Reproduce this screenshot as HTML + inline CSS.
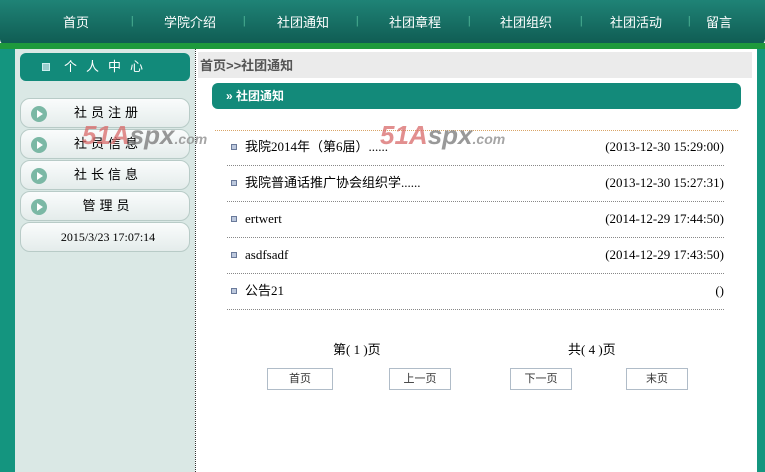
<!DOCTYPE html>
<html><head><meta charset="utf-8"><style>
*{margin:0;padding:0;box-sizing:border-box}
body{width:765px;height:472px;overflow:hidden;position:relative;background:#fff;font-family:"Liberation Serif","Noto Sans CJK SC",serif;font-size:12px;color:#000}
.a{position:absolute}
.hdr{left:0;top:0;width:765px;height:45px;background:linear-gradient(#1f8376,#0f5b52);border-radius:0 0 6px 6px}
.nav{top:12px;color:#fff;font-family:"Liberation Sans","Noto Sans CJK SC",sans-serif;font-size:13px}
.sep{top:13px;color:#8fc;font-size:12px;opacity:.7}
.gbar{left:0;top:43px;width:765px;height:6px;background:#1e9a3c}
.lstr{left:0;top:49px;width:15px;height:423px;background:#14957f}
.side{left:15px;top:49px;width:180px;height:423px;background:#dae8e5}
.dot{left:195px;top:49px;width:1px;height:423px;border-left:1px dotted #333}
.rstr{left:757px;top:49px;width:8px;height:423px;background:#14967f}
.pc{left:20px;top:53px;width:170px;height:28px;background:#128a7a;border-radius:6px;color:#fff;font-family:"Liberation Sans","Noto Sans CJK SC",sans-serif;font-size:13px;letter-spacing:9px;line-height:28px;padding-left:44px}
.pc i{position:absolute;left:22px;top:10px;width:8px;height:8px;background:#9cc;border:1px solid #cee}
.btn{left:20px;width:170px;height:30px;border:1px solid #b8cbc7;border-radius:10px;background:linear-gradient(#fafcfc,#e4eceb);font-family:"Liberation Sans","Noto Sans CJK SC",sans-serif;font-size:13px;letter-spacing:4px;line-height:28px;text-align:center;padding-left:6px}
.btn b{position:absolute;left:10px;top:7px;width:16px;height:16px;border-radius:50%;background:#7bb8a5}
.btn b:after{content:"";position:absolute;left:6px;top:4px;border-left:6px solid #fff;border-top:4px solid transparent;border-bottom:4px solid transparent}
.bc{left:198px;top:52px;width:554px;height:26px;background-image:radial-gradient(#bbb 0.7px,transparent 0.8px);background-size:2px 2px;font-weight:bold;color:#555;font-family:"Liberation Sans","Noto Sans CJK SC",sans-serif;font-size:13px;line-height:28px;padding-left:2px}
.tt{left:212px;top:83px;width:529px;height:26px;background:#138a7a;border-radius:6px;color:#fff;font-weight:bold;font-family:"Liberation Sans","Noto Sans CJK SC",sans-serif;font-size:12px;line-height:26px;padding-left:14px}
.ol{left:215px;top:130px;width:523px;border-top:1px dotted #d9a466}
.row{left:227px;width:497px;height:36px;border-bottom:1px dotted #888;font-size:13px;line-height:34px}
.row i{position:absolute;left:4px;top:14px;width:6px;height:6px;border:1px solid #6a7a9a;background:#bcc8dd}
.row span{position:absolute;left:18px}
.row em{position:absolute;right:0;font-style:normal}
.pb{top:368px;height:22px;border:1px solid #b0bcc8;background:#fff;font-family:"Liberation Sans","Noto Sans CJK SC",sans-serif;font-size:11px;text-align:center;line-height:20px;color:#333}
.wm{font-family:"Liberation Sans",sans-serif;font-weight:bold;font-style:italic;font-size:26px;color:#d96a6a;opacity:.75}
.wm span{color:#777}.wm small{font-size:14px;color:#888}
</style></head><body>
<div class="a hdr"></div>
<div class="a nav" style="left:63px">首页</div><div class="a sep" style="left:131px">|</div>
<div class="a nav" style="left:164px">学院介绍</div><div class="a sep" style="left:243px">|</div>
<div class="a nav" style="left:277px">社团通知</div><div class="a sep" style="left:356px">|</div>
<div class="a nav" style="left:389px">社团章程</div><div class="a sep" style="left:468px">|</div>
<div class="a nav" style="left:500px">社团组织</div><div class="a sep" style="left:580px">|</div>
<div class="a nav" style="left:610px">社团活动</div><div class="a sep" style="left:688px">|</div>
<div class="a nav" style="left:706px">留言</div>
<div class="a gbar"></div>
<div class="a lstr"></div><div class="a side"></div><div class="a dot"></div><div class="a rstr"></div>
<div class="a pc"><i></i>个人中心</div>
<div class="a btn" style="top:98px"><b></b>社员注册</div>
<div class="a btn" style="top:129px"><b></b>社员信息</div>
<div class="a btn" style="top:160px"><b></b>社长信息</div>
<div class="a btn" style="top:191px"><b></b>管理员</div>
<div class="a btn" style="top:222px;font-family:'Liberation Serif',serif;font-size:12px;letter-spacing:0"> 2015/3/23 17:07:14</div>
<div class="a bc">首页&gt;&gt;社团通知</div>
<div class="a tt">» 社团通知</div>
<div class="a ol"></div>
<div class="a row" style="top:130px"><i></i><span>我院2014年（第6届）......</span><em>(2013-12-30 15:29:00)</em></div>
<div class="a row" style="top:166px"><i></i><span>我院普通话推广协会组织学......</span><em>(2013-12-30 15:27:31)</em></div>
<div class="a row" style="top:202px"><i></i><span>ertwert</span><em>(2014-12-29 17:44:50)</em></div>
<div class="a row" style="top:238px"><i></i><span>asdfsadf</span><em>(2014-12-29 17:43:50)</em></div>
<div class="a row" style="top:274px"><i></i><span>公告21</span><em>()</em></div>
<div class="a wm" style="left:82px;top:120px">51A<span>spx</span><small>.com</small></div>
<div class="a wm" style="left:380px;top:120px">51A<span>spx</span><small>.com</small></div>
<div class="a" style="left:333px;top:339px;font-size:13px">第( 1 )页</div>
<div class="a" style="left:568px;top:339px;font-size:13px">共( 4 )页</div>
<div class="a pb" style="left:267px;width:66px">首页</div>
<div class="a pb" style="left:389px;width:62px">上一页</div>
<div class="a pb" style="left:510px;width:62px">下一页</div>
<div class="a pb" style="left:626px;width:62px">末页</div>
</body></html>
